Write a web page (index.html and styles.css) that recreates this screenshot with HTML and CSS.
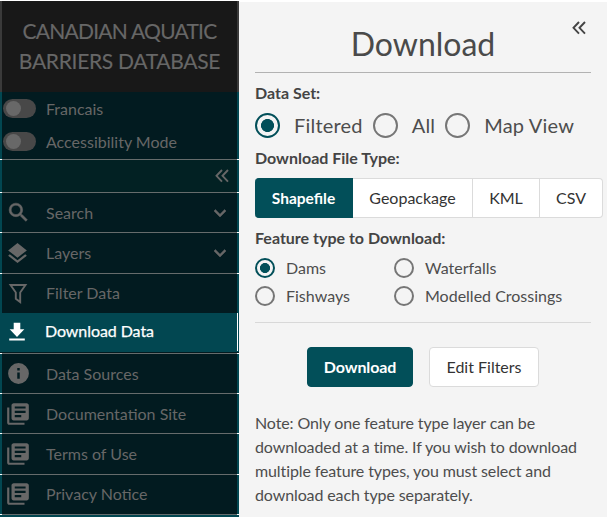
FILE: index.html
```html
<!DOCTYPE html>
<html lang="en">
<head>
<meta charset="utf-8">
<title>Canadian Aquatic Barriers Database</title>
<link rel="stylesheet" href="styles.css">
</head>
<body>
<svg class="defs" width="0" height="0">
  <symbol id="book" viewBox="0 0 24 24"><path d="M4 6H2v14c0 1.100.9 2 2 2h14v-2H4V6zm16-4H8c-1.100 0-2 .9-2 2v12c0 1.100.9 2 2 2h12c1.100 0 2-.9 2-2V4c0-1.100-.9-2-2-2zm-1 9H9V9h10v2zm-4 4H9v-2h6v2zm4-8H9V5h10v2z"/></symbol>
  <symbol id="chevron" viewBox="0 0 24 24"><path d="M7.400 8.600 12 13.170l4.600-4.570L18 10l-6 6-6-6z" stroke="currentColor" stroke-width=".5"/></symbol>
  <symbol id="double" viewBox="0 0 14 14"><path d="M7 1 1.500 6.800 7 12.600M13 1 7.500 6.800 13 12.600" fill="none" stroke="currentColor" stroke-width="1.900"/></symbol>
</svg>
<div class="app">
  <nav class="sidebar">
    <h1 class="brand"><span class="brand-a">CANADIAN AQUATIC</span><span class="brand-b">BARRIERS DATABASE</span></h1>
    <div class="toggles">
      <label class="toggle"><i class="switch"></i><span>Francais</span></label>
      <label class="toggle"><i class="switch"></i><span>Accessibility Mode</span></label>
    </div>
    <div class="rule"></div>
    <div class="collapse"><svg class="double"><use href="#double"/></svg></div>
    <div class="rule"></div>
    <a class="item h39"><svg class="icon search" viewBox="0 0 24 24"><path stroke="currentColor" stroke-width=".5" d="M15.500 14h-.79l-.28-.27A6.470 6.470 0 0 0 16 9.500 6.500 6.500 0 1 0 9.500 16c1.610 0 3.090-.59 4.230-1.570l.27.28v.79l5 4.990L20.490 19l-4.990-5zm-6 0C7.010 14 5 11.990 5 9.500S7.010 5 9.500 5 14 7.010 14 9.500 11.990 14 9.500 14z"/></svg><span>Search</span><svg class="chevron"><use href="#chevron"/></svg></a>
    <div class="rule"></div>
    <a class="item h40"><svg class="icon layers" viewBox="0 0 24 24"><path d="m11.990 18.540-7.370-5.730L3 14.070l9 7 9-7-1.630-1.270-7.380 5.740zM12 16l7.360-5.730L21 9l-9-7-9 7 1.630 1.270L12 16z"/></svg><span>Layers</span><svg class="chevron"><use href="#chevron"/></svg></a>
    <div class="rule"></div>
    <a class="item h39 raised"><svg class="icon filter" viewBox="0 0 22 22"><path d="M3.500 3h15l-5.300 7.500V20l-4.400-3.300v-6.200z" fill="none" stroke="currentColor" stroke-width="1.900"/></svg><span>Filter Data</span></a>
    <a class="item active"><svg class="icon down" viewBox="0 0 24 24"><path d="M20 9h-4.400V2H8.400v7H4l8 8.400zM3.500 19v2.300h17V19z"/></svg><span>Download Data</span></a>
    <div class="rule"></div>
    <a class="item h39"><svg class="icon info" viewBox="0 0 24 24"><path d="M12 2a10 10 0 1 0 0 20 10 10 0 0 0 0-20zm1.200 15h-2.400v-6h2.400zm0-8h-2.400V6.800h2.400z"/></svg><span>Data Sources</span></a>
    <div class="rule"></div>
    <a class="item h39"><svg class="icon book"><use href="#book"/></svg><span>Documentation Site</span></a>
    <div class="rule"></div>
    <a class="item h40"><svg class="icon book"><use href="#book"/></svg><span>Terms of Use</span></a>
    <div class="rule"></div>
    <a class="item h39 raised"><svg class="icon book"><use href="#book"/></svg><span>Privacy Notice</span></a>
    <div class="rule"></div>
  </nav>
  <main class="panel">
    <header class="head"><h2>Download</h2><svg class="double close"><use href="#double"/></svg></header>
    <h3 class="label">Data Set:</h3>
    <div class="dataset">
      <label><i class="radio big on"></i><span>Filtered</span></label>
      <label><i class="radio big"></i><span>All</span></label>
      <label><i class="radio big"></i><span>Map View</span></label>
    </div>
    <h3 class="label">Download File Type:</h3>
    <div class="segments"><button class="seg on">Shapefile</button><button class="seg geo">Geopackage</button><button class="seg kml">KML</button><button class="seg csv">CSV</button></div>
    <h3 class="label">Feature type to Download:</h3>
    <div class="features">
      <label><i class="radio on"></i>Dams</label>
      <label><i class="radio"></i>Waterfalls</label>
      <label><i class="radio"></i>Fishways</label>
      <label><i class="radio"></i>Modelled Crossings</label>
    </div>
    <div class="actions"><button class="btn primary">Download</button><button class="btn">Edit Filters</button></div>
    <p class="note">Note: Only one feature type layer can be<br>downloaded at a time. If you wish to download<br>multiple feature types, you must select and<br>download each type separately.</p>
  </main>
</div>
</body>
</html>
```
FILE: styles.css
```css
* { box-sizing: border-box; }
body { margin: 0; background: #fff; font: 16px/24px Lato, "Liberation Sans", sans-serif; color: #4d4d4d; overflow: hidden; }
h1, h2, h3, p { margin: 0; font-weight: 400; }
.defs { position: absolute; }
svg { fill: currentColor; flex: none; }
.app { display: flex; height: 517px; padding-top: 2px; }

.sidebar { width: 239px; flex: none; background: #024751; color: #676767; }
.brand { height: 91px; margin-top: -1px; padding-top: 15px; background: linear-gradient(90deg, #3a3a3a 2px, #181818 2px 237px, #3a3a3a 237px); font-size: 21px; line-height: 30px; text-align: center; white-space: nowrap; -webkit-text-stroke: .15px #676767; }
.brand span { display: block; }
.brand-a { letter-spacing: -.75px; }
.brand-b { letter-spacing: -.3px; }
.toggles, .collapse, .item { background: linear-gradient(90deg, #024751 2px, #021b20 2px 237px, #024751 237px); }
.collapse { background: linear-gradient(90deg, #024751 2px, #022123 2px 237px, #024751 237px); }
.rule { height: 1px; background: linear-gradient(90deg, #fff 2px, #666c6c 2px 237px, #fff 237px); }
.toggles { height: 67px; padding: 0 0 0 3px; }
.toggle { display: flex; align-items: center; height: 33px; font-size: 16px; }
.toggle span { padding-top: 1px; }
.switch { width: 33px; height: 19px; border-radius: 10px; margin-right: 10px; background: #484848; padding: 2px 3px; }
.switch::before { content: ""; display: block; width: 15px; height: 15px; border-radius: 50%; background: #686868; }
.collapse { height: 32px; display: flex; align-items: center; justify-content: flex-end; padding-right: 10px; }
.double { width: 14px; height: 14px; }
.item { display: flex; align-items: center; padding-left: 7px; white-space: nowrap; }
.item span { margin-left: 17px; }
.h39 { height: 39px; }
.h40 { height: 40px; }
.raised { padding-bottom: 2px; }
.icon { width: 22px; height: 22px; }
.search { width: 25px; height: 25px; margin: 0 -2px 0 -1px; }
.layers { width: 25px; height: 25px; margin: 0 -1px 0 -2px; }
.down { margin: -2px 1px 0 -1px; }
.info { width: 25px; height: 25px; margin: 0 -2px 0 -1px; }
.book { width: 26px; height: 26px; margin: 0 -2px 0 -2px; }
.chevron { width: 24px; height: 24px; margin-left: auto; margin-right: 7px; }
.active { height: 40px; background: #024751; color: #fff; box-shadow: inset 0 -1px #021b20; background-image: linear-gradient(#fff, #fff); background-size: 1px 38px; background-position: 237px 0; background-repeat: no-repeat; -webkit-text-stroke: .25px #fff; }
.active span { margin-left: 16px; padding: 0 0 4px; letter-spacing: -.07px; }

.panel { width: 368px; background: #f4f4f4; padding: 0 16px; }
.head { position: relative; height: 71px; border-bottom: 1px solid #b2b2b2; text-align: center; }
.head h2 { font-size: 32px; line-height: 84px; color: #4a4a4a; }
.close { position: absolute; top: 19px; right: 5px; color: #444; }
.label { font-weight: 700; font-size: 16px; line-height: 24px; color: #444; white-space: nowrap; }
.head + .label { margin-top: 8px; }
.radio { display: block; flex: none; width: 20px; height: 20px; border: 2px solid #767676; border-radius: 50%; }
.radio.on { border-color: #024f59; background: radial-gradient(circle, #024f59 4.7px, transparent 5.3px); }
.radio.big { width: 25px; height: 25px; }
.radio.big.on { background: radial-gradient(circle, #024f59 6.2px, transparent 6.800px); }
.dataset { display: flex; height: 41px; align-items: center; gap: 10px; font-size: 20px; letter-spacing: .2px; white-space: nowrap; }
.dataset label { display: flex; align-items: center; gap: 14px; }
.dataset span { padding-bottom: 1px; }
.segments { display: flex; width: 348px; height: 40px; margin: 8px 0; }
button { font: inherit; font-size: 16px; color: #333; background: #fff; border: 1px solid #dbdbdb; padding: 0; white-space: nowrap; }
.seg { border-left: 0; }
.seg.on { width: 98px; background: #024f59; border-color: #024f59; color: #fff; border-radius: 4px 0 0 4px; font-weight: 700; font-size: 15.500px; }
.geo { width: 120px; }
.kml { width: 67px; }
.csv { width: 63px; border-radius: 0 4px 4px 0; }
.features { display: grid; grid-template-columns: 139px 1fr; grid-template-rows: 28px 28px; padding: 4px 0 12px; border-bottom: 1px solid #d8d8d8; white-space: nowrap; }
.features label { display: flex; align-items: center; gap: 11px; }
.actions { display: flex; gap: 16px; margin: 24px 0 24px 52px; }
.btn { width: 110px; height: 40px; border-radius: 4px; }
.btn.primary { width: 106px; background: #024f59; border-color: #024f59; color: #fff; font-weight: 700; letter-spacing: -.1px; }
.note { white-space: nowrap; letter-spacing: -.11px; }
```
